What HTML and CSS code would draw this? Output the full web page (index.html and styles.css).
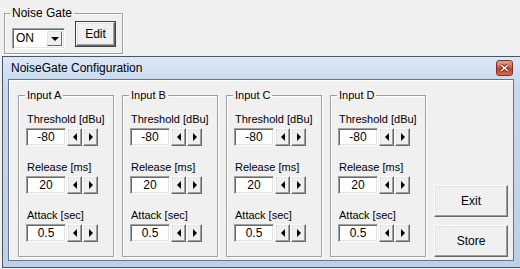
FILE: index.html
```html
<!DOCTYPE html>
<html lang="en">
<head>
    <meta charset="UTF-8">
    <title>NoiseGate Configuration</title>
    <link rel="stylesheet" href="styles.css">
</head>
<body>
    <div class="desk">
        <fieldset class="group ng-group">
            <legend>Noise Gate</legend>
            <div class="ng-row">
                <div class="combo">
                    <span class="combo-value">ON</span>
                    <span class="combo-btn"><i class="tri-down"></i></span>
                </div>
                <button class="btn btn-default">Edit</button>
            </div>
        </fieldset>
    </div>

    <div class="dialog">
        <div class="titlebar">
            <span class="title">NoiseGate Configuration</span>
            <span class="close">
                <svg width="9" height="8" viewBox="0 0 9 8">
                    <path d="M1 1 L8 7 M8 1 L1 7" stroke="#5a2418" stroke-width="3.2"/>
                    <path d="M1 1 L8 7 M8 1 L1 7" stroke="#fff" stroke-width="1.6"/>
                </svg>
            </span>
        </div>
        <div class="client">
            <fieldset class="group input-group">
                <legend>Input A</legend>
                <div class="field"><label>Threshold [dBu]</label><div class="spin"><span class="spin-box">-80</span><span class="spin-btn"><i class="tri-left"></i></span><span class="spin-btn"><i class="tri-right"></i></span></div></div>
                <div class="field"><label>Release [ms]</label><div class="spin"><span class="spin-box">20</span><span class="spin-btn"><i class="tri-left"></i></span><span class="spin-btn"><i class="tri-right"></i></span></div></div>
                <div class="field"><label>Attack [sec]</label><div class="spin"><span class="spin-box">0.5</span><span class="spin-btn"><i class="tri-left"></i></span><span class="spin-btn"><i class="tri-right"></i></span></div></div>
            </fieldset>
            <fieldset class="group input-group">
                <legend>Input B</legend>
                <div class="field"><label>Threshold [dBu]</label><div class="spin"><span class="spin-box">-80</span><span class="spin-btn"><i class="tri-left"></i></span><span class="spin-btn"><i class="tri-right"></i></span></div></div>
                <div class="field"><label>Release [ms]</label><div class="spin"><span class="spin-box">20</span><span class="spin-btn"><i class="tri-left"></i></span><span class="spin-btn"><i class="tri-right"></i></span></div></div>
                <div class="field"><label>Attack [sec]</label><div class="spin"><span class="spin-box">0.5</span><span class="spin-btn"><i class="tri-left"></i></span><span class="spin-btn"><i class="tri-right"></i></span></div></div>
            </fieldset>
            <fieldset class="group input-group">
                <legend>Input C</legend>
                <div class="field"><label>Threshold [dBu]</label><div class="spin"><span class="spin-box">-80</span><span class="spin-btn"><i class="tri-left"></i></span><span class="spin-btn"><i class="tri-right"></i></span></div></div>
                <div class="field"><label>Release [ms]</label><div class="spin"><span class="spin-box">20</span><span class="spin-btn"><i class="tri-left"></i></span><span class="spin-btn"><i class="tri-right"></i></span></div></div>
                <div class="field"><label>Attack [sec]</label><div class="spin"><span class="spin-box">0.5</span><span class="spin-btn"><i class="tri-left"></i></span><span class="spin-btn"><i class="tri-right"></i></span></div></div>
            </fieldset>
            <fieldset class="group input-group">
                <legend>Input D</legend>
                <div class="field"><label>Threshold [dBu]</label><div class="spin"><span class="spin-box">-80</span><span class="spin-btn"><i class="tri-left"></i></span><span class="spin-btn"><i class="tri-right"></i></span></div></div>
                <div class="field"><label>Release [ms]</label><div class="spin"><span class="spin-box">20</span><span class="spin-btn"><i class="tri-left"></i></span><span class="spin-btn"><i class="tri-right"></i></span></div></div>
                <div class="field"><label>Attack [sec]</label><div class="spin"><span class="spin-box">0.5</span><span class="spin-btn"><i class="tri-left"></i></span><span class="spin-btn"><i class="tri-right"></i></span></div></div>
            </fieldset>
            <div class="actions">
                <button class="btn btn-big">Exit</button>
                <button class="btn btn-big">Store</button>
            </div>
        </div>
    </div>
</body>
</html>
```

FILE: styles.css
```css
html, body {
    margin: 0;
    padding: 0;
}
body {
    width: 520px;
    height: 269px;
    overflow: hidden;
    background: #f0f0f0;
    font-family: "Liberation Sans", Arial, sans-serif;
    font-size: 11px;
    color: #000;
}

/* etched group box */
.group {
    margin: 0;
    border: 1px solid #a0a0a0;
    box-shadow: inset 1px 1px 0 #fff, 1px 1px 0 #fff;
    box-sizing: border-box;
    min-width: 0;
}
.group legend {
    padding: 0 2px;
    margin-left: -1px;
    line-height: 13px;
    font-size: 11px;
}

/* top area */
.desk {
    height: 56px;
    padding-top: 7px;
    padding-left: 4px;
    box-sizing: border-box;
}
.ng-group {
    width: 119px;
    height: 47px;
    padding: 1px 0 0 7px;
}
.ng-group legend {
    margin-left: -2px;
    font-size: 12px;
}
.ng-row {
    display: flex;
    gap: 10px;
    align-items: flex-start;
}
.combo {
    margin-top: 7px;
    width: 53px;
    height: 21px;
    box-sizing: border-box;
    display: flex;
    background: #fff;
    border: 1px solid;
    border-color: #a0a0a0 #fff #fff #a0a0a0;
    box-shadow: inset 1px 1px 0 #696969, inset -1px -1px 0 #e3e3e3;
    padding: 2px;
}
.combo-value {
    flex: 1;
    line-height: 15px;
    padding-left: 1px;
    font-size: 12px;
}
.combo-btn {
    width: 15px;
    height: 15px;
    box-sizing: border-box;
    background: #f0f0f0;
    border: 1px solid;
    border-color: #e3e3e3 #696969 #696969 #e3e3e3;
    display: flex;
    align-items: center;
    justify-content: center;
}

/* buttons */
.btn {
    font-family: inherit;
    font-size: 11px;
    background: #f0f0f0;
    border: 1px solid;
    border-color: #fff #696969 #696969 #fff;
    box-shadow: inset -1px -1px 0 #a0a0a0, inset 1px 1px 0 #e3e3e3;
    padding: 0;
    margin: 0;
    color: #000;
}
.btn-default {
    width: 41px;
    height: 26px;
    outline: 1px solid #404040;
    outline-offset: -1px;
    border-width: 2px;
    font-size: 12px;
}
.btn-big {
    width: 74px;
    height: 32px;
    font-size: 12px;
}

/* dialog window */
.dialog {
    margin-left: 2px;
    width: 520px;
    height: 212px;
    box-sizing: border-box;
    border: 1px solid #4a5566;
    background: linear-gradient(#dbe7f6, #c6d8ee 30px, #bcd0ea);
    padding: 0 6px 6px 5px;
}
.titlebar {
    height: 22px;
    display: flex;
    align-items: center;
    justify-content: space-between;
    padding-left: 3px;
}
.title {
    font-size: 12px;
    color: #000;
}
.close {
    width: 17px;
    height: 16px;
    box-sizing: border-box;
    margin-right: 2px;
    border: 1px solid #7a3326;
    border-radius: 3px;
    background: linear-gradient(#e8a08c, #d0583c 50%, #c2402a 55%, #d46a4c);
    display: flex;
    align-items: center;
    justify-content: center;
}
.client {
    width: 506px;
    height: 182px;
    box-sizing: border-box;
    border: 1px solid #6a7788;
    box-shadow: inset 1px 1px 0 #fff;
    background: #f0f0f0;
    display: flex;
    gap: 8px;
    padding: 9px 0 3px 9px;
}

/* input group */
.input-group {
    width: 96px;
    height: 168px;
    padding: 11px 0 0 7px;
    display: flex;
    flex-direction: column;
    gap: 15px;
}
.field label {
    display: block;
    line-height: 13px;
    margin-bottom: 2px;
    padding-left: 1px;
}
.spin {
    display: flex;
    gap: 1px;
}
.spin-box {
    width: 40px;
    height: 18px;
    box-sizing: border-box;
    background: #fff;
    border: 1px solid;
    border-color: #a0a0a0 #fff #fff #a0a0a0;
    box-shadow: inset 1px 1px 0 #696969, inset -1px -1px 0 #e3e3e3;
    text-align: center;
    line-height: 17px;
    font-size: 12px;
}
.spin-btn {
    width: 15px;
    height: 18px;
    box-sizing: border-box;
    background: #f0f0f0;
    border: 1px solid;
    border-color: #fff #696969 #696969 #fff;
    box-shadow: inset -1px -1px 0 #a0a0a0, inset 1px 1px 0 #e3e3e3;
    display: flex;
    align-items: center;
    justify-content: center;
}

.actions {
    width: 74px;
    display: flex;
    flex-direction: column;
    justify-content: flex-end;
    gap: 8px;
}

/* triangles */
.tri-left, .tri-right, .tri-down {
    display: block;
    width: 0;
    height: 0;
}
.tri-left {
    border-top: 4px solid transparent;
    border-bottom: 4px solid transparent;
    border-right: 4px solid #000;
}
.tri-right {
    border-top: 4px solid transparent;
    border-bottom: 4px solid transparent;
    border-left: 4px solid #000;
}
.tri-down {
    border-left: 4px solid transparent;
    border-right: 4px solid transparent;
    border-top: 4px solid #000;
    margin-top: 1px;
}
```
